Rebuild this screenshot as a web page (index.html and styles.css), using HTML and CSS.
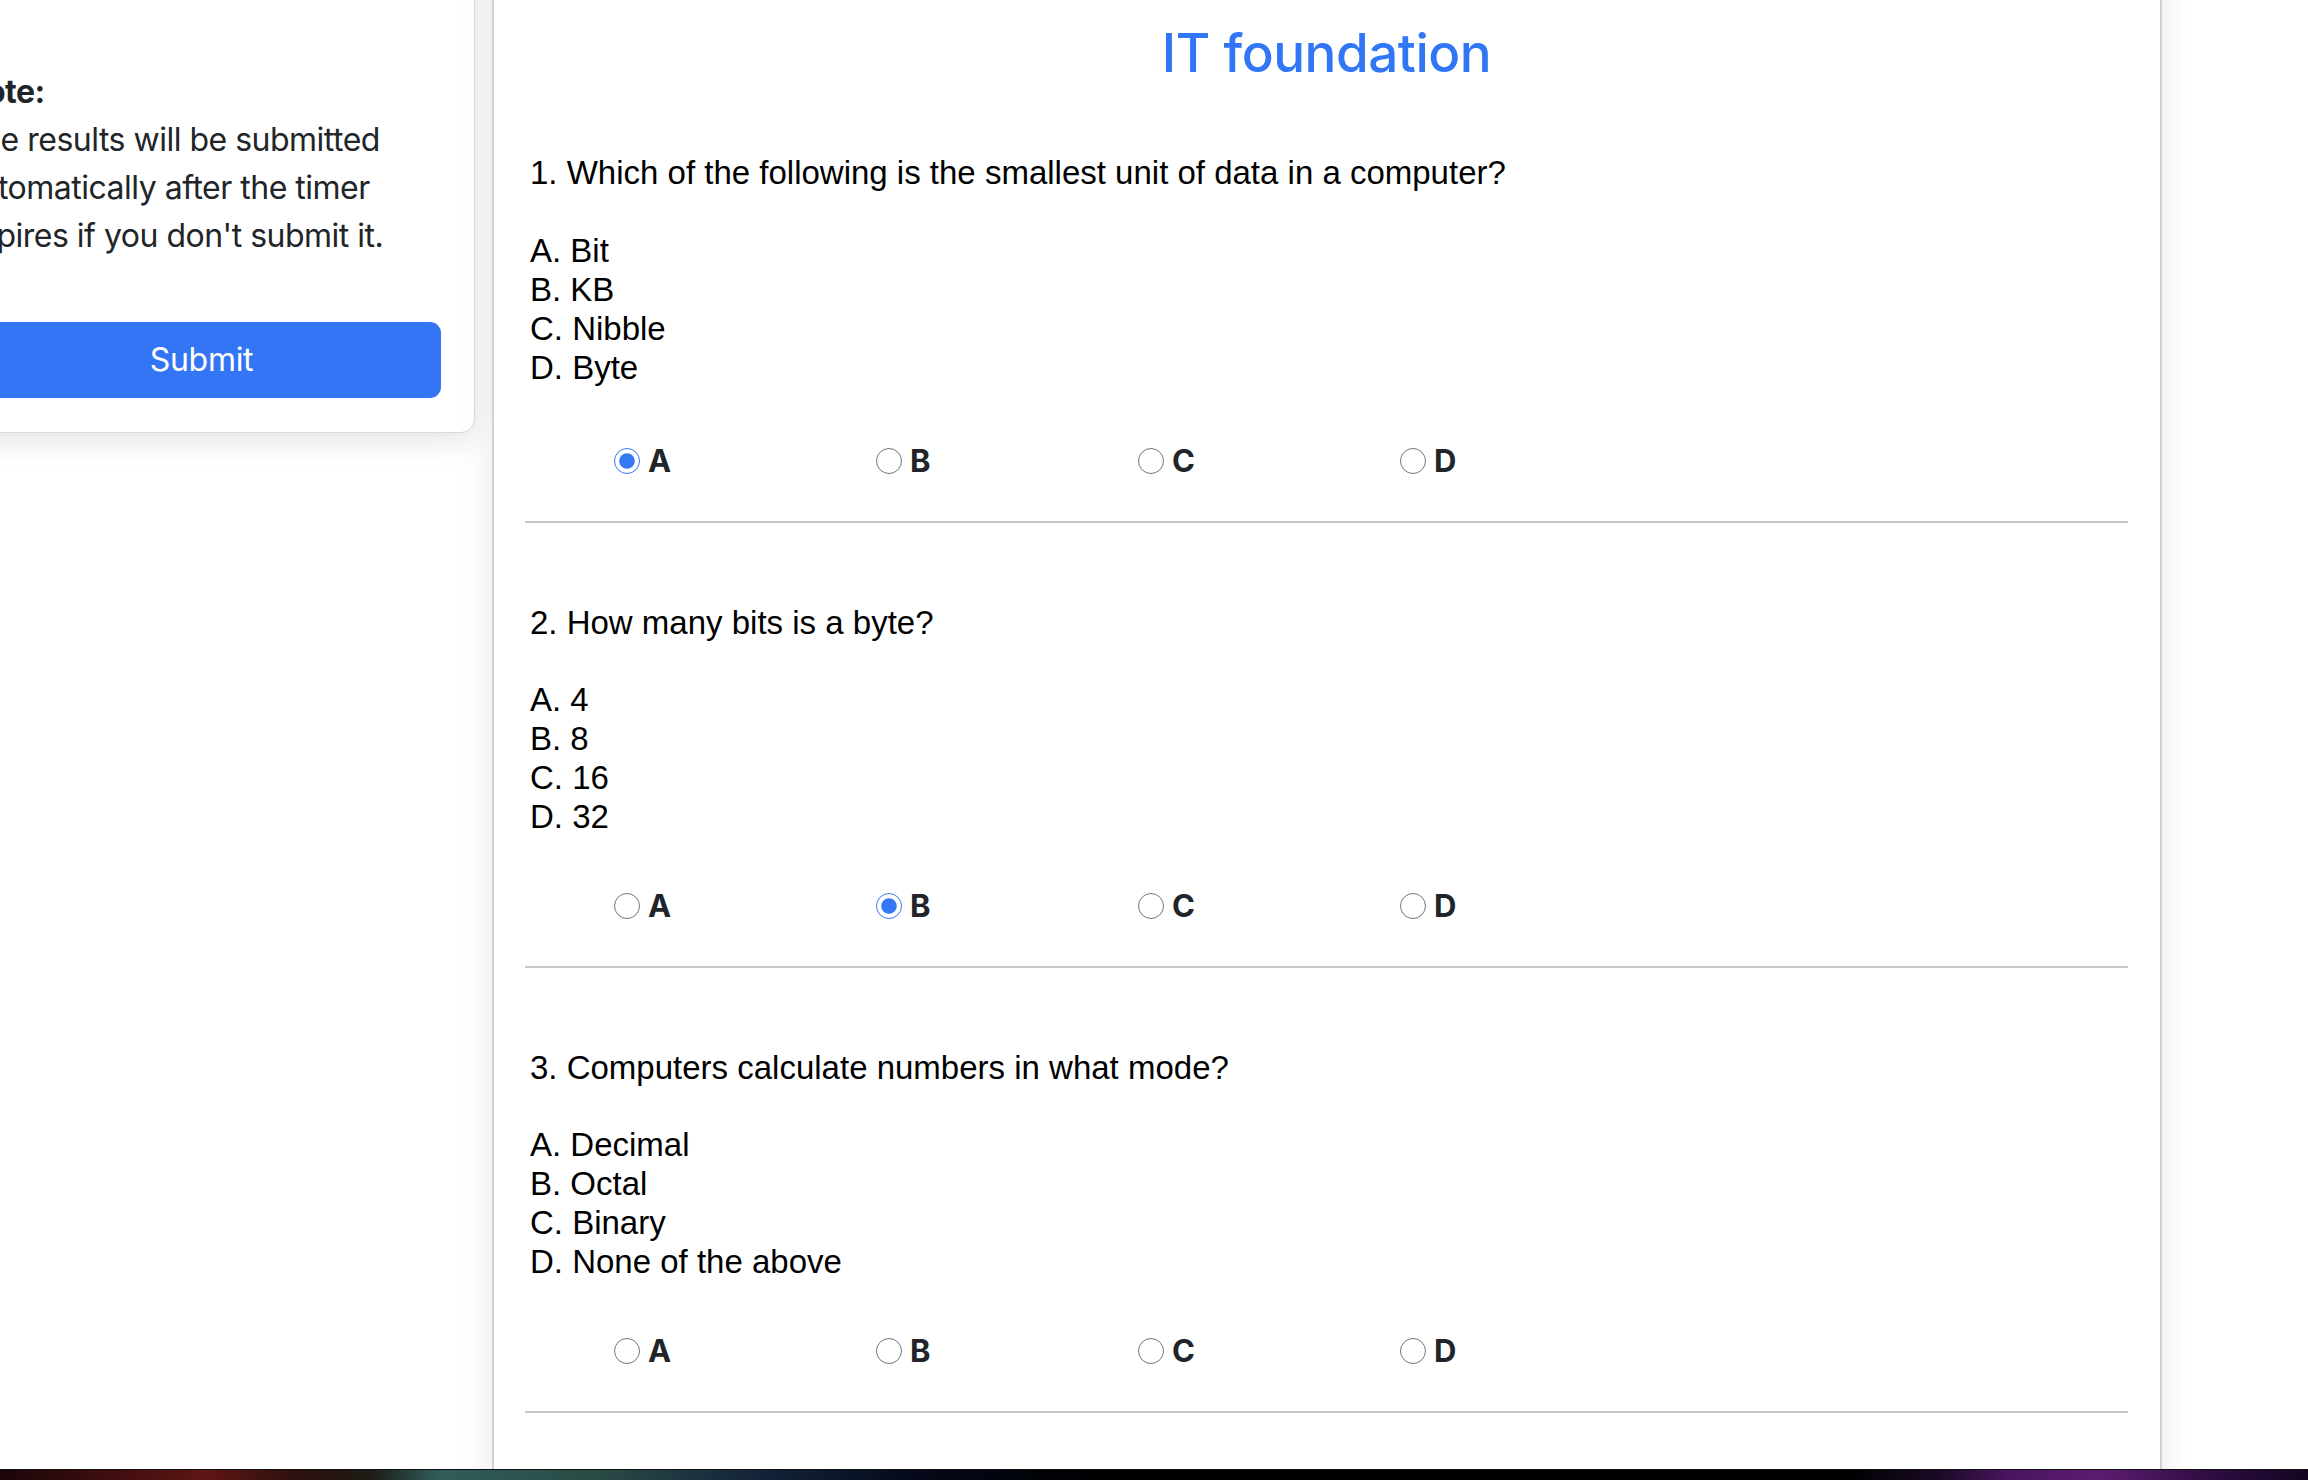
FILE: index.html
```html
<!DOCTYPE html>
<html lang="en">
<head>
<meta charset="utf-8">
<title>IT foundation</title>
<link rel="stylesheet" href="styles.css">
</head>
<body>
<div class="page">
  <aside class="sidebar">
    <div class="note-card">
      <p class="note"><b>Note:</b><br>The results will be submitted<br>automatically after the timer<br>expires if you don't submit it.</p>
      <button class="btn-submit" type="button">Submit</button>
    </div>
  </aside>
  <main class="quiz">
    <h3 class="quiz-title">IT foundation</h3>

    <section class="q-block">
      <div class="q-text">1. Which of the following is the smallest unit of data in a computer?</div>
      <div class="q-options">A. Bit<br>B. KB<br>C. Nibble<br>D. Byte</div>
      <div class="q-answers">
        <label class="ans"><input type="radio" name="q1" checked><span>A</span></label>
        <label class="ans"><input type="radio" name="q1"><span>B</span></label>
        <label class="ans"><input type="radio" name="q1"><span>C</span></label>
        <label class="ans"><input type="radio" name="q1"><span>D</span></label>
      </div>
      <hr class="q-sep">
    </section>

    <section class="q-block">
      <div class="q-text">2. How many bits is a byte?</div>
      <div class="q-options">A. 4<br>B. 8<br>C. 16<br>D. 32</div>
      <div class="q-answers">
        <label class="ans"><input type="radio" name="q2"><span>A</span></label>
        <label class="ans"><input type="radio" name="q2" checked><span>B</span></label>
        <label class="ans"><input type="radio" name="q2"><span>C</span></label>
        <label class="ans"><input type="radio" name="q2"><span>D</span></label>
      </div>
      <hr class="q-sep">
    </section>

    <section class="q-block">
      <div class="q-text">3. Computers calculate numbers in what mode?</div>
      <div class="q-options">A. Decimal<br>B. Octal<br>C. Binary<br>D. None of the above</div>
      <div class="q-answers">
        <label class="ans"><input type="radio" name="q3"><span>A</span></label>
        <label class="ans"><input type="radio" name="q3"><span>B</span></label>
        <label class="ans"><input type="radio" name="q3"><span>C</span></label>
        <label class="ans"><input type="radio" name="q3"><span>D</span></label>
      </div>
      <hr class="q-sep">
    </section>
  </main>
</div>
<div class="desktop-strip"></div>
</body>
</html>
```

FILE: styles.css
```css
html, body {
  margin: 0;
  padding: 0;
  height: 1480px;
  overflow: hidden;
  background: #ffffff;
}

body {
  font-family: Inter, "Noto Sans", sans-serif;
  color: #212529;
}

.page {
  display: flex;
  align-items: flex-start;
  gap: 17px;
}

.sidebar {
  flex: 0 0 547px;
  margin-left: -72px;
  margin-top: -60px;
}

.note-card {
  background: #fff;
  border: 1px solid #dadada;
  border-radius: 14px;
  padding: 127px 33px 34px 33px;
  box-shadow: 0 8px 30px rgba(0, 0, 0, 0.11);
}

.note {
  margin: 0 0 62px 0;
  font-size: 32px;
  line-height: 48px;
  letter-spacing: -0.5px;
  color: #212529;
}

.note b {
  font-weight: 700;
}

.btn-submit {
  display: block;
  width: 100%;
  height: 76px;
  border: 0;
  border-radius: 11px;
  background: #3375f4;
  color: #fff;
  font-family: Inter, "Noto Sans", sans-serif;
  font-size: 32px;
  line-height: 48px;
  letter-spacing: -0.3px;
  padding: 0;
}

.quiz {
  flex: 0 0 1670px;
  box-sizing: border-box;
  margin-top: -40px;
  height: 1600px;
  padding: 63px 32px 0 31px;
  background: #fff;
  border-left: 2px solid #d2d2d2;
  border-right: 2px solid #d2d2d2;
  box-shadow: 0 0 34px rgba(0, 0, 0, 0.09);
}

.quiz-title {
  margin: 0;
  text-align: center;
  font-family: Inter, "Noto Sans", sans-serif;
  font-size: 53px;
  font-weight: 500;
  letter-spacing: -0.5px;
  line-height: 60px;
  color: #3176f5;
}

.q-text,
.q-options {
  font-family: "Liberation Sans", Arial, sans-serif;
  font-size: 33px;
  line-height: 39px;
  color: #000;
  padding-left: 5px;
}

.q-text {
  margin-top: 80px;
}

.q-options {
  margin-top: 38px;
}

.q-answers {
  display: flex;
  margin-top: 50px;
  padding-left: 89px;
  height: 40px;
}

.q-block:first-of-type .q-text {
  margin-top: 70px;
}

.q-block:first-of-type .q-options {
  margin-top: 39px;
}

.q-block:first-of-type .q-answers {
  margin-top: 54px;
}

.ans {
  flex: 0 0 262px;
  display: flex;
  align-items: center;
  gap: 8px;
  height: 40px;
}

.ans input {
  width: 26px;
  height: 26px;
  margin: 0;
  accent-color: #3478f6;
}

.ans span {
  font-family: Inter, "Noto Sans", sans-serif;
  font-weight: 700;
  font-size: 31px;
  line-height: 40px;
  color: #212529;
}

.q-sep {
  margin: 40px 0 0 0;
  border: 0;
  border-top: 2px solid #c8c8c8;
  height: 0;
}

.desktop-strip {
  position: fixed;
  left: 0;
  right: 0;
  bottom: 0;
  height: 10px;
  border-top: 1px solid #111;
  background: linear-gradient(90deg,
    #1a0608 0%, #3a0c0e 4%, #5e1614 9%, #2a100e 13%, #1d1a14 16%,
    #2f5d5a 19%, #2a4a44 26%, #13233a 33%, #040818 40%, #000 48%,
    #000 80%, #1a0a24 84%, #4a1460 87%, #5c1c6e 91%, #2c0c40 96%, #140620 100%);
}
```
